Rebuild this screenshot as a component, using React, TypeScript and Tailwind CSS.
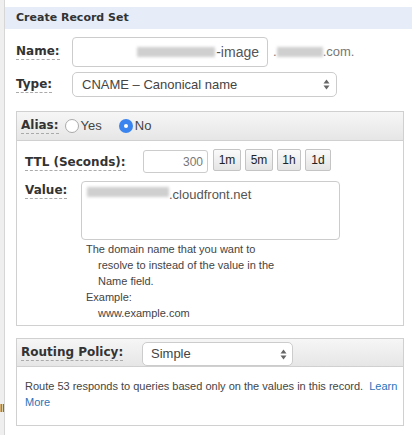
import { ReactNode } from 'react';

function Label({ children }: { children: ReactNode }) {
  return (
    <span className="font-['DejaVu_Sans',sans-serif] text-[12px] font-bold leading-[14px] text-[#333] border-b border-dashed border-[#aaa] pb-[1px]">
      {children}
    </span>
  );
}

function Blur({ w }: { w: number }) {
  return <span className="inline-block h-[10px] bg-[#cfcfcf] blur-[1.5px] align-middle" style={{ width: w }} />;
}

function Arrows() {
  return (
    <svg width="7" height="11" viewBox="0 0 7 11" className="shrink-0">
      <path d="M3.5 0.5 L6.5 4.5 L0.5 4.5 Z" fill="#666" />
      <path d="M3.5 10.5 L6.5 6.5 L0.5 6.5 Z" fill="#666" />
    </svg>
  );
}

function TtlButton({ label, w }: { label: string; w: string }) {
  return (
    <button
      className={`${w} h-[22px] rounded-[2px] border border-[#c4c4c4] bg-gradient-to-b from-[#fafafa] to-[#e4e4e4] text-[12px] text-[#222] leading-none`}
    >
      {label}
    </button>
  );
}

export default function App() {
  return (
    <div className="flex min-h-[435px] bg-white font-['Liberation_Sans',Arial,sans-serif]">
      <div className="w-[5px] shrink-0 overflow-hidden border-r border-[#d6d6d6] bg-[#efefef] pt-[403px]">
        <span className="block text-[10px] leading-[12px] text-[#333]">ll</span>
      </div>

      <div className="flex-1 pt-[7px]">
        <div className="h-[22px] flex items-center bg-[#e6edf8] pl-[11px] font-['DejaVu_Sans',sans-serif] text-[11px] font-bold text-[#333]">
          Create Record Set
        </div>

        <div className="pl-[11px] pr-[8px]">
          {/* Name */}
          <div className="mt-[8px] flex items-center">
            <div className="w-[56px] flex">
              <Label>Name:</Label>
            </div>
            <div className="w-[196px] h-[30px] rounded-[4px] border border-[#ccc] flex items-center justify-end gap-[1px] pr-[8px] text-[14px] text-[#555]">
              <Blur w={78} />
              <span>-image</span>
            </div>
            <div className="ml-[5px] flex items-center text-[13px] text-[#777]">
              <span>.</span>
              <Blur w={46} />
              <span>.com.</span>
            </div>
          </div>

          {/* Type */}
          <div className="mt-[5px] flex items-center">
            <div className="w-[56px] flex">
              <Label>Type:</Label>
            </div>
            <div className="w-[265px] h-[25px] rounded-[5px] border border-[#ccc] flex items-center justify-between pl-[9px] pr-[6px] text-[13px] text-[#444]">
              <span>CNAME – Canonical name</span>
              <Arrows />
            </div>
          </div>

          {/* Alias panel */}
          <div className="mt-[14px] border border-[#d0d0d0]">
            <div className="h-[29px] flex items-center gap-[6px] pl-[4px] bg-gradient-to-b from-[#f6f6f6] to-[#e6e6e6] border-b border-[#d0d0d0]">
              <div className="flex">
                <Label>Alias:</Label>
              </div>
              <label className="flex items-center gap-[2px] text-[13px] text-[#444]">
                <span className="w-[14px] h-[14px] rounded-full border border-[#aaa] bg-white" />
                <span>Yes</span>
              </label>
              <label className="ml-[11px] flex items-center gap-[2px] text-[13px] text-[#444]">
                <span className="w-[14px] h-[14px] rounded-full bg-[#3a84f0] flex items-center justify-center">
                  <span className="w-[4px] h-[4px] rounded-full bg-white" />
                </span>
                <span>No</span>
              </label>
            </div>

            <div className="pl-[8px] pr-[8px] pt-[8px] pb-[4px]">
              {/* TTL */}
              <div className="flex items-start">
                <div className="w-[118px] pt-[6px] flex">
                  <Label>TTL (Seconds):</Label>
                </div>
                <div className="mt-[1px] w-[65px] h-[23px] rounded-[3px] border border-[#ccc] flex items-center justify-end pr-[4px] text-[12px] text-[#777]">
                  300
                </div>
                <div className="ml-[5px] flex gap-[4px]">
                  <TtlButton label="1m" w="w-[28px]" />
                  <TtlButton label="5m" w="w-[28px]" />
                  <TtlButton label="1h" w="w-[24px]" />
                  <TtlButton label="1d" w="w-[26px]" />
                </div>
              </div>

              {/* Value */}
              <div className="mt-[8px] flex items-start">
                <div className="w-[56px] pt-[2px] flex">
                  <Label>Value:</Label>
                </div>
                <div>
                  <div className="w-[259px] h-[59px] rounded-[4px] border border-[#ccc] pl-[5px] pt-[5px] text-[13px] leading-[16px] text-[#555] flex items-start">
                    <Blur w={82} />
                    <span>.cloudfront.net</span>
                  </div>
                  <div className="mt-[1px] pl-[5px] text-[11px] leading-[16px] text-[#444]">
                    <div>The domain name that you want to</div>
                    <div className="pl-[12px]">resolve to instead of the value in the</div>
                    <div className="pl-[12px]">Name field.</div>
                    <div>Example:</div>
                    <div className="pl-[12px]">www.example.com</div>
                  </div>
                </div>
              </div>
            </div>
          </div>

          {/* Routing panel */}
          <div className="mt-[12px] border border-[#d0d0d0]">
            <div className="h-[28px] flex items-end pl-[4px] bg-gradient-to-b from-[#f6f6f6] to-[#e6e6e6] border-b border-[#d0d0d0]">
              <div className="w-[121px] self-center pt-[1px] flex">
                <Label>Routing Policy:</Label>
              </div>
              <div className="w-[151px] h-[24px] rounded-[5px] border border-[#ccc] bg-white flex items-center justify-between pl-[8px] pr-[5px] text-[13px] text-[#444]">
                <span>Simple</span>
                <Arrows />
              </div>
            </div>
            <div className="pl-[8px] pt-[11px] pb-[15px] text-[11px] leading-[16px] text-[#444]">
              <div className="whitespace-nowrap">
                Route 53 responds to queries based only on the values in this record.
                <a className="ml-[6px] text-[#2a73b8]">Learn</a>
              </div>
              <div>
                <a className="text-[#2a73b8]">More</a>
              </div>
            </div>
          </div>
        </div>
      </div>
    </div>
  );
}
